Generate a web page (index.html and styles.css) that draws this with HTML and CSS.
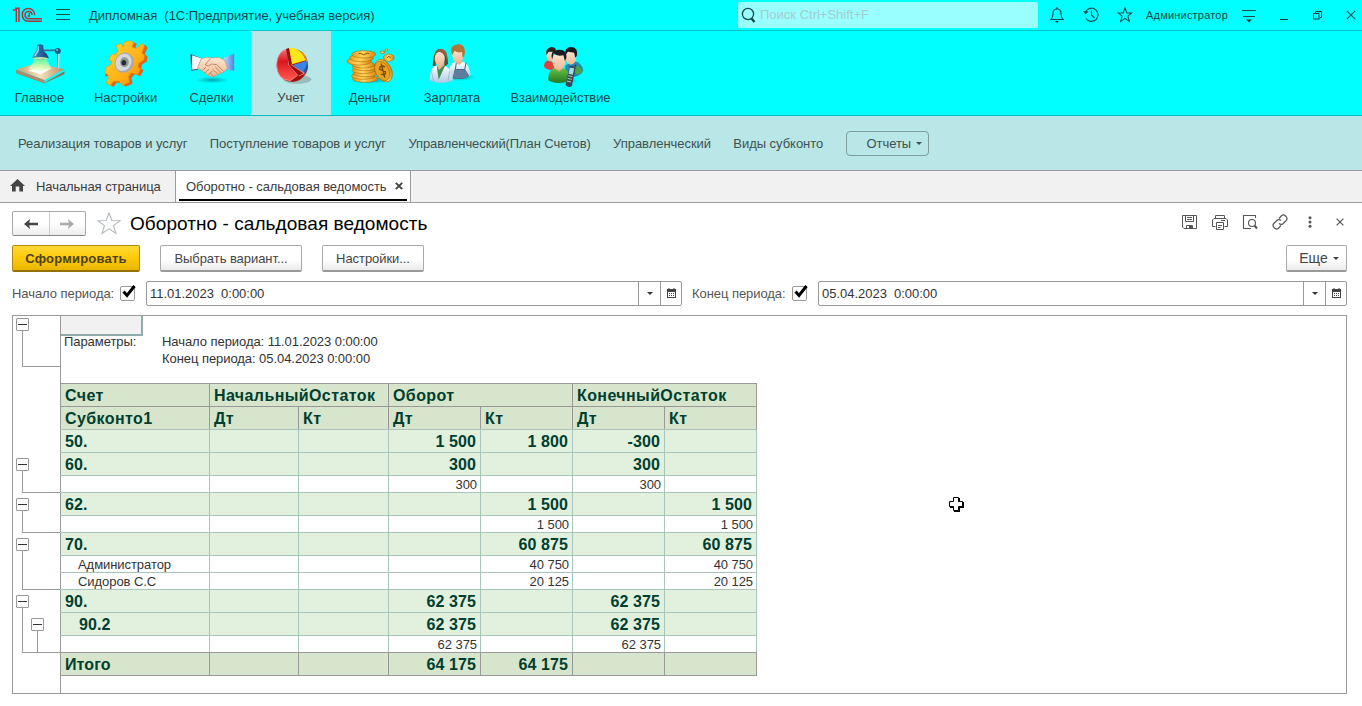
FILE: index.html
```
<!DOCTYPE html>
<html lang="ru">
<head>
<meta charset="utf-8">
<title>Оборотно - сальдовая ведомость</title>
<link rel="stylesheet" href="styles.css">
</head>
<body>
<header class="titlebar">
  <svg class="logo" width="32" height="16" viewBox="36 21 96 48" fill="none"><g stroke="#a8353f" stroke-width="4.500"><path d="M39 32L49 27V66M57 66V25H45"/><path d="M104 46C104 20 67 18 67 44C67 58 76 64 88 64H126"/><path d="M96 45C96 31 75 31 75 44C75 52 81 56 88 56H126"/><path d="M88 39V48H83"/></g></svg>
  <svg class="burger" width="14" height="12" viewBox="0 0 14 12" stroke="#1c5050" stroke-width="1"><path d="M0 .5H14M0 5.500H14M0 10.500H14"/></svg>
  <span class="app-title">Дипломная&nbsp; (1С:Предприятие, учебная версия)</span>
  <div class="search">
    <svg width="18" height="18" viewBox="0 0 18 18" fill="none" stroke="#124a4a"><circle cx="8" cy="8" r="5.600" stroke-width="1.300"/><path d="M11.500 12.500L14.500 16" stroke-width="2.400"/></svg>
    <span>Поиск Ctrl+Shift+F</span>
  </div>
  <div class="tools">
    <svg width="16" height="18" viewBox="0 0 16 18" fill="none" stroke="#155050" stroke-width="1.200"><path d="M2 13.500C4 11.500 4 10 4 7.500C4 4.500 5.500 3 8 3S12 4.500 12 7.500C12 10 12 11.500 14 13.500Z"/><path d="M8 1V3"/><path d="M6 15H10L8 17Z" fill="#155050" stroke="none"/></svg>
    <svg width="16" height="18" viewBox="0 0 16 18" fill="none" stroke="#155050" stroke-width="1.200"><path d="M2.500 6A6.600 6.600 0 1 1 3 12.500"/><path d="M8.500 4.500V9L11.500 12"/><path d="M0 5L5.500 5.500L2.500 8.500Z" fill="#155050" stroke="none"/></svg>
    <svg width="16" height="18" viewBox="0 0 16 18" fill="none" stroke="#155050" stroke-width="1.100"><path d="M8 1.800L9.900 6.900L14.700 7L10.900 10.200L12.300 15.400L8 12.400L3.700 15.400L5.100 10.200L1.300 7L6.100 6.900Z"/></svg>
    <span class="user">Администратор</span>
    <svg class="t-menu" width="14" height="14" viewBox="0 0 14 14"><path d="M0 1.500H14M1 7.500H13" stroke="#155050"/><path d="M4 10.500H10L7 13.500Z" fill="#124040"/></svg>
    <svg class="t-min" width="8" height="14" viewBox="0 0 8 14"><path d="M0 11.500H8" stroke="#124040"/></svg>
    <svg class="t-max" width="9" height="9" viewBox="0 0 9 9" fill="none" stroke="#124040"><path d="M2.500 2V.5H8.500V6.500H7"/><rect x=".5" y="2.500" width="5.500" height="5.500"/></svg>
    <svg class="t-close" width="10" height="10" viewBox="0 0 10 10" stroke="#155050" stroke-width="1.100"><path d="M.8 .8L9.200 9.200M9.200 .8L.8 9.200"/></svg>
  </div>
</header>

<svg class="defs" width="0" height="0">
  <defs>
    <linearGradient id="gold" x2="1" y2="0"><stop offset="0" stop-color="#ef9a16"/><stop offset=".45" stop-color="#ffd75b"/><stop offset="1" stop-color="#d9820c"/></linearGradient>
    <linearGradient id="gear" x2="1" y2="1"><stop offset="0" stop-color="#ffd83a"/><stop offset=".6" stop-color="#ffb013"/><stop offset="1" stop-color="#f08410"/></linearGradient>
    <linearGradient id="steel" x2="1" y2="0"><stop offset="0" stop-color="#5c9ccc"/><stop offset=".4" stop-color="#2e6ea6"/><stop offset="1" stop-color="#164070"/></linearGradient>
    <linearGradient id="light" x2="0" y2="1"><stop offset="0" stop-color="#7cf58a"/><stop offset="1" stop-color="#f8ffd0"/></linearGradient>
    <linearGradient id="wood" x2="1" y2="0"><stop offset="0" stop-color="#c8a070"/><stop offset=".5" stop-color="#f5e2bc"/><stop offset="1" stop-color="#b88a60"/></linearGradient>
    <linearGradient id="red" x2="0" y2="1"><stop offset="0" stop-color="#ef7777"/><stop offset=".4" stop-color="#dc1620"/><stop offset="1" stop-color="#ff5a50"/></linearGradient>
    <linearGradient id="skin" x2="0" y2="1"><stop offset="0" stop-color="#ffe7d2"/><stop offset="1" stop-color="#eeb894"/></linearGradient>
    <linearGradient id="sleeve" x2="1" y2="0"><stop offset="0" stop-color="#bcd8f8"/><stop offset="1" stop-color="#4d86d8"/></linearGradient>
    <linearGradient id="coat" x2="0" y2="1"><stop offset="0" stop-color="#ffffff"/><stop offset="1" stop-color="#a8cce4"/></linearGradient>
    <linearGradient id="green" x2="0" y2="1"><stop offset="0" stop-color="#68c048"/><stop offset="1" stop-color="#247a24"/></linearGradient>
    <radialGradient id="shadow"><stop offset="0" stop-color="#006a78" stop-opacity=".6"/><stop offset="1" stop-color="#006a78" stop-opacity="0"/></radialGradient>
  </defs>
</svg>

<nav class="sections">
  <div class="section s-main">
    <svg width="50" height="48" viewBox="43.500 120 150 144"><path d="M48 209L132 248L192 214V222L132 250L48 220Z" fill="#9a6c48"/><path d="M48 208L110 190L192 208L132 240Z" fill="url(#wood)"/><path d="M48 209L132 240V250L48 219Z" fill="#b58a66"/><path d="M82 212L112 200L148 208L122 223Z" fill="#fff"/><path d="M104 176L85 207L118 214L153 207L137 176Z" fill="url(#light)" opacity=".85"/><path d="M128 151H172L175 206" fill="none" stroke="#3c7196" stroke-width="5"/><path d="M175 160V206" stroke="#c4d4dc" stroke-width="5"/><circle cx="172" cy="153" r="9" fill="#1e5c86"/><circle cx="170" cy="150" r="3" fill="#7fb8dc"/><path d="M110 136Q118 129 128 136L130 153Q142 162 145 174Q120 184 95 174Q98 161 108 153Z" fill="url(#steel)"/><path d="M113 139V152L103 168" stroke="#a8dcf4" stroke-width="4" fill="none"/><ellipse cx="120" cy="175" rx="23" ry="4" fill="#b8e8a8"/></svg>
    <span>Главное</span>
  </div>
  <div class="section s-setup">
    <svg width="50" height="48" viewBox="301.500 120 150 144"><path d="M380 131L398 126L409 132L403 146L416 149L434 134L441 143L433 162L441 170L439 184L424 194L422 206L429 211L420 228L402 223L393 233L396 251L375 260L364 248L348 248L339 261L326 253L334 233L328 226L314 230L316 211L329 202Z" fill="#dd6410"/><path d="M371 127L389 122L400 128L394 142L407 145L425 130L432 139L424 158L432 166L430 180L415 190L413 202L420 207L411 224L393 219L384 229L387 247L366 256L355 244L339 244L330 257L317 249L325 229L319 222L313 218L317 202L330 195L334 184L325 181L333 162L345 164L352 153L347 137L360 130L369 141Z" fill="url(#gear)" stroke="#e68a14" stroke-width="1.500"/><ellipse cx="371" cy="188" rx="28" ry="31" transform="rotate(32 371 188)" fill="#a6aaad"/><ellipse cx="369" cy="187" rx="23" ry="27" transform="rotate(32 369 187)" fill="#d5d7d8"/><ellipse cx="372" cy="187" rx="13" ry="15" fill="#92979a"/><ellipse cx="370" cy="188" rx="7" ry="8" fill="#252b30"/></svg>
    <span>Настройки</span>
  </div>
  <div class="section s-deals">
    <svg width="50" height="48" viewBox="559.500 120 150 144"><ellipse cx="635" cy="240" rx="50" ry="10" fill="url(#shadow)"/><path d="M570 162L601 174L591 209L572 212Z" fill="#263746"/><path d="M575 166L602 175L591 207L573 209Z" fill="#f6f8fa"/><path d="M701 161L670 173L681 209L701 212Z" fill="url(#sleeve)"/><path d="M602 177Q617 168 632 174L655 172L673 181L681 205Q669 220 655 222Q640 234 625 228L603 211L591 204Z" fill="url(#skin)" stroke="#b98264" stroke-width="1.500"/><path d="M629 176L614 195Q622 202 634 192L649 194L669 214M606 211L616 202M613 219L625 207M623 226L635 213M639 228L629 219M652 222L636 208M661 218L644 200" fill="none" stroke="#b47756" stroke-width="2.500"/></svg>
    <span>Сделки</span>
  </div>
  <div class="section s-account active">
    <svg width="50" height="48" viewBox="108 30 150 144"><ellipse cx="202" cy="148" rx="42" ry="13" fill="#71888a" opacity=".45"/><ellipse cx="187" cy="106" rx="47" ry="50" fill="#af241a"/><path d="M175 56Q140 62 140 107Q142 149 181 152L205 137L176 104Z" fill="url(#red)" stroke="#f5a0a0" stroke-width="2"/><path d="M168 57L178 106L205 136L183 153Q207 154 221 135L202 116L186 100L177 54Z" fill="#941010"/><path d="M177 53Q213 51 227 91L186 103Z" fill="#ffe719"/><path d="M200 57Q232 69 233 105L227 91Q220 66 200 57Z" fill="#ed9a13"/><path d="M189 105L230 92Q236 113 223 130Z" fill="#3886e8"/><path d="M231 95Q238 112 225 130L220 122Q229 113 231 95Z" fill="#215bae"/><path d="M182 103L223 130L207 138" stroke="#ffb8a0" stroke-width="2" fill="none"/></svg>
    <span>Учет</span>
  </div>
  <div class="section s-money">
    <svg width="50" height="48" viewBox="343.500 30 150 144"><ellipse cx="420" cy="151" rx="65" ry="10" fill="url(#shadow)"/><g fill="url(#gold)" stroke="#a45a08" stroke-width="1.500"><ellipse cx="404" cy="146" rx="38" ry="11"/><ellipse cx="398" cy="138" rx="35" ry="10"/><ellipse cx="405" cy="130" rx="36" ry="10"/><ellipse cx="399" cy="121" rx="34" ry="10"/><ellipse cx="403" cy="112" rx="37" ry="10"/><ellipse cx="398" cy="104" rx="34" ry="10"/><ellipse cx="386" cy="94" rx="37" ry="11"/><ellipse cx="393" cy="84" rx="36" ry="11"/><ellipse cx="400" cy="73" rx="36" ry="11"/><ellipse cx="475" cy="83" rx="16" ry="11"/><ellipse cx="456" cy="67" rx="7" ry="4"/><ellipse cx="468" cy="60" rx="5" ry="3"/><ellipse cx="459" cy="122" rx="24" ry="36" transform="rotate(-27 459 122)"/><ellipse cx="455" cy="123" rx="20" ry="31" transform="rotate(-27 455 123)" fill="#e9a31c"/></g><path d="M384 72Q389 67 394 72T405 72T416 71M469 84L475 79L481 84" fill="none" stroke="#885008" stroke-width="3"/><path d="M464 111Q448 103 447 117L465 126Q467 139 451 132M452 101L463 143" fill="none" stroke="#784608" stroke-width="4"/></svg>
    <span>Деньги</span>
  </div>
  <div class="section s-pay">
    <svg width="50" height="48" viewBox="591 30 150 144"><ellipse cx="690" cy="142" rx="48" ry="11" fill="url(#shadow)"/><path d="M656 130Q659 101 675 96H699Q716 98 722 136Q698 151 657 139Z" fill="url(#coat)"/><path d="M679 98L676 119H704L708 98M675 119H705L716 138Q699 149 670 144Z" fill="none" stroke="#46627c" stroke-width="3"/><path d="M675 119H705L716 138Q699 149 670 144Z" fill="#5f7e9e"/><path d="M675 80L674 96L687 105L698 96L696 80Z" fill="#e8b38f"/><ellipse cx="684" cy="77" rx="17" ry="20" fill="url(#skin)"/><path d="M667 75Q656 49 677 44Q699 38 704 58Q707 76 698 84L696 66Q682 70 674 62Z" fill="#b17538"/><path d="M599 151Q599 119 614 107H645Q667 116 669 151Q635 167 599 151Z" fill="url(#coat)" stroke="#9abcd2"/><path d="M620 108L626 149L645 107Z" fill="#418b58"/><path d="M605 126L611 154M659 124L654 153" stroke="#86a9c2" stroke-width="2"/><path d="M621 92V108L627 120L640 107V91Z" fill="#e9b391"/><path d="M608 107Q611 57 630 57Q654 57 654 102L643 110V76H618L617 108Z" fill="#714025"/><ellipse cx="629" cy="86" rx="15" ry="21" fill="url(#skin)"/><path d="M611 91Q611 66 629 65L645 74L650 91Q656 58 630 57Q612 59 611 91Z" fill="#976040"/></svg>
    <span>Зарплата</span>
  </div>
  <div class="section s-people">
    <svg width="50" height="48" viewBox="916.500 30 150 144"><ellipse cx="1000" cy="152" rx="45" ry="10" fill="url(#shadow)"/><path d="M941 111Q939 95 955 91L975 102L967 119Q950 122 941 111Z" fill="#df4038"/><ellipse cx="960" cy="77" rx="12" ry="17" fill="url(#skin)"/><path d="M948 75Q943 54 963 51Q981 52 974 66L955 65Z" fill="#2d231f"/><path d="M1005 106L1030 94Q1055 98 1058 121Q1054 138 1025 142L1003 129Z" fill="#2686b2"/><path d="M1032 120L1043 105L1056 122Q1050 136 1037 132Z" fill="#46a646"/><ellipse cx="1021" cy="82" rx="16" ry="22" fill="url(#skin)"/><path d="M1006 74Q999 54 1021 51Q1044 51 1039 78L1034 83L1031 68L1012 65Z" fill="#171b20"/><path d="M972 105V120L986 130L997 117V103Z" fill="#dc9c76"/><path d="M953 145Q954 119 973 114L986 126L998 114Q1018 121 1021 151Q984 166 955 152Z" fill="url(#green)"/><ellipse cx="985" cy="94" rx="19" ry="26" fill="url(#skin)"/><path d="M965 88Q957 63 980 60Q1010 56 1008 83L1003 93L999 76Q977 80 970 70Z" fill="#191d23"/><path d="M1018 107L1036 110L1024 169Q1011 174 1005 164Z" fill="#394954"/><path d="M1018 113L1031 115L1027 134L1014 131Z" fill="#a9d9e7"/><path d="M1013 137L1026 140M1011 145L1024 148M1009 153L1022 156" stroke="#b8c4ca" stroke-width="3"/><path d="M1033 108L1036 105" stroke="#222" stroke-width="4"/></svg>
    <span>Взаимодействие</span>
  </div>
</nav>

<nav class="commands">
  <span>Реализация товаров и услуг</span>
  <span>Поступление товаров и услуг</span>
  <span class="plan">Управленческий(План Счетов)</span>
  <span>Управленческий</span>
  <span>Виды субконто</span>
  <button class="reports">Отчеты <i class="caret"></i></button>
</nav>

<div class="tabs">
  <div class="tab home">
    <svg width="15" height="13" viewBox="0 0 15 13"><path d="M7.500 0L15 7H13V12.500H9.300V7.500H5.700V12.500H2V7H0Z" fill="#454545"/></svg>
    <span>Начальная страница</span>
  </div>
  <div class="tab current">
    <div class="tab-in">
      <span>Оборотно - сальдовая ведомость</span>
      <svg width="8" height="8" viewBox="0 0 8 8" stroke="#444" stroke-width="1.900"><path d="M.8 .8L7.200 7.200M7.200 .8L.8 7.200"/></svg>
    </div>
  </div>
</div>

<main class="form">
  <div class="form-head">
    <div class="history">
      <span><svg width="14" height="10" viewBox="0 0 14 10"><path d="M14 5H4" stroke="#444" stroke-width="2.500"/><path d="M0 5L6 0L5 5L6 10Z" fill="#444"/></svg></span>
      <span><svg width="14" height="10" viewBox="0 0 14 10"><path d="M0 5H10" stroke="#aaa" stroke-width="2.500"/><path d="M14 5L8 0L9 5L8 10Z" fill="#aaa"/></svg></span>
    </div>
    <svg class="fav" width="24" height="23" viewBox="0 0 24 23" fill="none" stroke="#b4babf" stroke-width="1.100"><path d="M12 1L14.800 8.500L23 8.700L16.500 13.600L19 21.500L12 16.800L5 21.500L7.500 13.600L1 8.700L9.200 8.500Z"/></svg>
    <h1>Оборотно - сальдовая ведомость</h1>
    <div class="form-icons">
      <svg width="16" height="16" viewBox="0 0 16 16" fill="none" stroke="#555"><path d="M1.500 1.500H15.500V14.500H3L1.500 13Z"/><path d="M4.500 1.500V7.500H12.500V1.500M6 3.500H11M6 5.500H11M5.500 14.500V11.500H11.500V14.500"/><path d="M8.500 12H11V14.500H8.500Z" fill="#555"/></svg>
      <svg width="17" height="16" viewBox="0 0 17 16" fill="none" stroke="#555"><path d="M4.500 4.500V1.500H13.500V4.500M4.500 12.500H1.500V6L3 4.500H15L16.500 6V12.500H13.500"/><path d="M5.500 8.500H12.500V15.500H5.500ZM7 11.500H11M7 13.500H9.500M10 6.500H14"/></svg>
      <svg width="16" height="16" viewBox="0 0 16 16" fill="none" stroke="#555" stroke-width="1.100"><path d="M13.500 4V1.500H1.500V14.500H9"/><circle cx="10" cy="9" r="3.500"/><path d="M12.500 11.500L15 14.500" stroke-width="2"/></svg>
      <svg width="16" height="16" viewBox="0 0 16 16" fill="none" stroke="#555" stroke-width="1.200"><path d="M7 4.500L9.500 1.800Q11.500 0 13.800 2.200Q16 4.500 14.200 6.500L11 9.700Q9 11.300 7 9.500M9 11.500L6.500 14.200Q4.500 16 2.200 13.800Q0 11.500 1.800 9.500L5 6.300Q7 4.700 9 6.500"/></svg>
      <svg class="dots" width="4" height="12" viewBox="0 0 4 12" fill="#555"><circle cx="2" cy="1.800" r="1.500"/><circle cx="2" cy="6" r="1.500"/><circle cx="2" cy="10.200" r="1.500"/></svg>
      <svg class="x" width="8" height="8" viewBox="0 0 8 8" stroke="#555" stroke-width="1.200"><path d="M.6 .6L7.400 7.400M7.400 .6L.6 7.400"/></svg>
    </div>
  </div>

  <div class="actions">
    <button class="btn primary">Сформировать</button>
    <button class="btn variant">Выбрать вариант...</button>
    <button class="btn settings">Настройки...</button>
    <button class="btn more">Еще <i class="caret"></i></button>
  </div>

  <div class="period">
    <label>Начало периода:</label>
    <span class="check"><svg width="16" height="14" viewBox="0 0 16 14" fill="none" stroke="#000" stroke-width="3"><path d="M2.500 6.500L6 10.500L13.500 1"/></svg></span>
    <div class="date first"><span>11.01.2023&nbsp; 0:00:00</span><b><i class="caret"></i></b><b><svg width="9" height="10" viewBox="0 0 9 10"><path d="M0 1H9V10H0ZM1 4V9H8V4Z" fill="#444" fill-rule="evenodd"/><path d="M2 0V2M7 0V2" stroke="#444"/><path d="M2 5.500H7M2 7.500H7" stroke="#444" stroke-dasharray="1 1"/></svg></b></div>
    <label class="second">Конец периода:</label>
    <span class="check"><svg width="16" height="14" viewBox="0 0 16 14" fill="none" stroke="#000" stroke-width="3"><path d="M2.500 6.500L6 10.500L13.500 1"/></svg></span>
    <div class="date last"><span>05.04.2023&nbsp; 0:00:00</span><b><i class="caret"></i></b><b><svg width="9" height="10" viewBox="0 0 9 10"><path d="M0 1H9V10H0ZM1 4V9H8V4Z" fill="#444" fill-rule="evenodd"/><path d="M2 0V2M7 0V2" stroke="#444"/><path d="M2 5.500H7M2 7.500H7" stroke="#444" stroke-dasharray="1 1"/></svg></b></div>
  </div>

  <section class="report">
    <div class="outline">
      <div class="node n1"><i class="toggle"></i><i class="stem"></i></div>
      <div class="node n2"><i class="toggle"></i><i class="stem"></i></div>
      <div class="node n3"><i class="toggle"></i><i class="stem"></i></div>
      <div class="node n4"><i class="toggle"></i><i class="stem"></i></div>
      <div class="node n5"><i class="toggle"></i><div class="stem"><div class="node inner"><i class="toggle"></i><i class="stem"></i></div></div></div>
    </div>
    <div class="sheet">
      <div class="params">
        <div class="picked"></div>
        <span>Параметры:</span><span>Начало периода: 11.01.2023 0:00:00</span>
        <span></span><span>Конец периода: 05.04.2023 0:00:00</span>
      </div>
      <table>
        <colgroup><col class="c1"><col class="c2"><col class="c3"><col class="c4"><col class="c4"><col class="c4"><col class="c4"></colgroup>
        <tr class="head"><td>Счет</td><td colspan="2">НачальныйОстаток</td><td colspan="2">Оборот</td><td colspan="2">КонечныйОстаток</td></tr>
        <tr class="head"><td>Субконто1</td><td>Дт</td><td>Кт</td><td>Дт</td><td>Кт</td><td>Дт</td><td>Кт</td></tr>
        <tr class="group"><td>50.</td><td></td><td></td><td>1 500</td><td>1 800</td><td>-300</td><td></td></tr>
        <tr class="group"><td>60.</td><td></td><td></td><td>300</td><td></td><td>300</td><td></td></tr>
        <tr class="item"><td></td><td></td><td></td><td>300</td><td></td><td>300</td><td></td></tr>
        <tr class="group"><td>62.</td><td></td><td></td><td></td><td>1 500</td><td></td><td>1 500</td></tr>
        <tr class="item"><td></td><td></td><td></td><td></td><td>1 500</td><td></td><td>1 500</td></tr>
        <tr class="group"><td>70.</td><td></td><td></td><td></td><td>60 875</td><td></td><td>60 875</td></tr>
        <tr class="item"><td>Администратор</td><td></td><td></td><td></td><td>40 750</td><td></td><td>40 750</td></tr>
        <tr class="item"><td>Сидоров С.С</td><td></td><td></td><td></td><td>20 125</td><td></td><td>20 125</td></tr>
        <tr class="group"><td>90.</td><td></td><td></td><td>62 375</td><td></td><td>62 375</td><td></td></tr>
        <tr class="group sub"><td>90.2</td><td></td><td></td><td>62 375</td><td></td><td>62 375</td><td></td></tr>
        <tr class="item end"><td></td><td></td><td></td><td>62 375</td><td></td><td>62 375</td><td></td></tr>
        <tr class="group total"><td>Итого</td><td></td><td></td><td>64 175</td><td>64 175</td><td></td><td></td></tr>
      </table>
    </div>
    <svg class="pointer" width="16" height="16" viewBox="0 0 16 16"><path d="M6 2H12V6H16V12H12V16H6V12H2V6H6Z" fill="#000"/><path d="M5.500 1.500H10.500V5.500H14.500V10.500H10.500V14.500H5.500V10.500H1.500V5.500H5.500Z" fill="#fff" stroke="#000"/></svg>
  </section>
</main>
</body>
</html>
```

FILE: styles.css
```
* { box-sizing: border-box; }
body { margin: 0; width: 1362px; height: 706px; overflow: hidden; background: #fff; color: #3c3c3c; font: 13px/17px "Liberation Sans", Arial, sans-serif; letter-spacing: -0.06px; }
svg { display: block; flex: none; }
i { font-style: normal; }
button { font: inherit; letter-spacing: inherit; color: inherit; margin: 0; padding: 0; }
.defs { position: absolute; }

.titlebar { height: 31px; display: flex; align-items: center; background: #00ffff; border-bottom: 1px solid #00caca; color: #104848; padding-left: 12px; white-space: nowrap; }
.burger { margin-left: 12px; }
.app-title { margin-left: 19px; width: 649px; letter-spacing: -0.03px; }
.search { width: 300px; height: 26px; margin-top: -1px; display: flex; align-items: center; background: #99ffff; border-radius: 2px; color: #a5cccc; padding-left: 2px; }
.search span { margin-left: 2px; letter-spacing: 0; }
.tools { display: flex; align-items: center; flex: 1; margin-left: 11px; gap: 18px; }
.user { font-size: 11px; letter-spacing: 0.2px; margin-left: -5px; }
.t-menu { margin: 2px 0 0 -4px; }
.t-min { margin-left: 6px; }
.t-max { margin: 1px 0 0 7px; }
.t-close { margin-left: 6px; }

.sections { height: 85px; display: flex; background: #00ffff; border-bottom: 1px solid #00bcbc; color: #1a4a4a; }
.section { display: flex; flex-direction: column; align-items: center; padding-top: 9px; }
.section span { margin-top: 1px; }
.s-main, .s-deals { width: 79px; }
.s-setup { width: 93px; }
.s-account { width: 80px; }
.s-money { width: 77px; }
.s-pay { width: 88px; }
.s-people { width: 129px; }
.section.active { background: #b9e6e6; color: #3c4646; }

.commands { height: 55px; display: flex; align-items: center; gap: 22.300px; padding-left: 18px; background: #b9e6e6; border-bottom: 1px solid #9b9b9b; color: #3f5252; white-space: nowrap; letter-spacing: -0.04px; }
.plan { letter-spacing: -0.09px; }
.reports { width: 83px; height: 25px; margin-left: 1px; background: none; border: 1px solid #7d9c9c; border-radius: 4px; display: flex; align-items: center; padding-left: 19px; }
.caret { display: inline-block; border: 3px solid transparent; border-top-color: currentColor; border-bottom: 0; margin-left: 5px; }

.tabs { height: 32px; display: flex; background: #f1f1f1; border-bottom: 1px solid #9b9b9b; white-space: nowrap; }
.tab { display: flex; align-items: center; }
.home { width: 175px; padding: 0 0 0 10px; gap: 11px; }
.home svg { margin-top: -2px; }
.current { width: 236px; background: #fff; border: solid #9b9b9b; border-width: 0 1px; padding: 0 3px; }
.tab-in { width: 228px; height: 27px; margin-top: 1px; padding: 0 0 0 7px; display: flex; align-items: center; gap: 8px; border-bottom: 2px solid #000; }

.form { padding: 8px 15px 0 12px; }
.form-head { height: 25px; display: flex; align-items: center; }
.history { width: 74px; height: 25px; display: flex; border: 1px solid #aaa; border-bottom-color: #888; border-radius: 2px; background: linear-gradient(#fff 50%, #ececec); }
.history span { flex: 1; display: flex; align-items: center; justify-content: center; }
.history span + span { border-left: 1px solid #ccc; }
.fav { margin-left: 11px; }
h1 { margin: 0 0 0 9px; font-size: 19px; line-height: 24px; font-weight: normal; color: #000; letter-spacing: 0.06px; }
.form-icons { margin: -3px 0 0 auto; display: flex; align-items: center; gap: 14px; padding-right: 3px; }
.dots { margin-left: 6px; }
.x { margin-left: 10px; }

.actions { display: flex; margin-top: 9px; }
.btn { height: 27px; border: 1px solid #aaa; border-bottom: 2px solid #999; border-radius: 2px; background: linear-gradient(#fff 55%, #ebebeb); color: #444; }
.primary { width: 128px; font-weight: bold; letter-spacing: 0.2px; background: linear-gradient(#ffd83a, #ffcc0c 45%, #e9b600); border-color: #b28b08; border-bottom-color: #927206; color: #4c4116; }
.variant { width: 142px; margin-left: 20px; }
.settings { width: 102px; margin-left: 20px; }
.more { width: 61px; margin-left: auto; display: flex; align-items: center; justify-content: center; padding-left: 5px; font-size: 14px; }

.period { display: flex; align-items: center; margin-top: 9px; height: 25px; color: #555; white-space: nowrap; }
.period > * { flex: none; }
.period label { width: 108px; }
.period .second { width: 100px; margin-left: 10px; }
.check { width: 15px; height: 15px; border: 1px solid #999; border-radius: 2px; }
.check svg { margin-top: -2px; }
.date { display: flex; height: 25px; margin-left: 11px; border: 1px solid #999; border-radius: 2px; color: #333; }
.date span { flex: 1; padding: 3px 0 0 3px; letter-spacing: -0.02px; }
.date b { width: 21px; display: flex; align-items: center; justify-content: center; border-left: 1px solid #999; }
.date b:nth-child(2) { width: 22px; }
.date .caret { margin: 0; }
.date svg { margin-top: -2px; }
.first { width: 536px; }
.last { width: 529px; }

.report { position: relative; display: flex; width: 1335px; height: 379px; margin-top: 9px; border: 1px solid #999; }
.outline { width: 47px; padding: 2px 0 0 3px; }
.node { display: flex; flex-direction: column; }
.toggle { width: 13px; height: 13px; border: 1px solid #999; border-radius: 1px; background: linear-gradient(#333, #333) center / 9px 1px no-repeat #fff; flex: none; }
.stem { margin-left: 6px; border: solid #999; border-width: 0 0 1px 1px; flex: 1; }
.n1 { height: 49px; }
.n2 { height: 35px; margin-top: 91px; }
.n3, .n4, .n5 { margin-top: 5px; }
.n3 { height: 35px; }
.n4 { height: 52px; }
.n5 { height: 58px; }
.inner { height: 34px; margin: 10px 0 0 8px; }
.inner .stem { border-bottom: 0; }
.sheet { border-left: 1px solid #999; }
.params { position: relative; display: grid; grid-template: 17px 17px / 98px 400px; height: 67px; padding: 17px 0 0 3px; color: #333; white-space: nowrap; }
.picked { position: absolute; left: 0; top: 0; width: 82px; height: 20px; background: #f1f1f1; border: solid #91aaaa; border-width: 0 2px 2px 0; }

table { table-layout: fixed; width: 697px; margin-left: -1px; border-collapse: collapse; }
.c1 { width: 149px; }
.c2 { width: 89px; }
.c3 { width: 90px; }
.c4 { width: 92px; }
td { border: 1px solid #a9c4ba; padding: 0 4px; text-align: right; white-space: nowrap; }
td:first-child { text-align: left; border-left-color: #999; }
.head td, .group td { height: 23px; padding-top: 1px; font: bold 16px/21px "Liberation Sans", Arial, sans-serif; letter-spacing: 0.1px; color: #003f2f; background: #e2f0de; }
.head td { background: #d6e5cc; border-color: #999; text-align: left; letter-spacing: 0.4px; }
.head + .head td { border-bottom-color: #a9c4ba; }
.sub td:first-child { padding-left: 18px; }
.item td { height: 17px; padding-top: 1px; font-size: 13px; line-height: 15px; padding-right: 3px; color: #333; }
.item td:first-child { padding-left: 17px; }
.end td { border-bottom-color: #999; }
.group.total td { background: #d6e5cc; border-color: #999; }
.pointer { position: absolute; left: 935px; top: 180px; }
```
